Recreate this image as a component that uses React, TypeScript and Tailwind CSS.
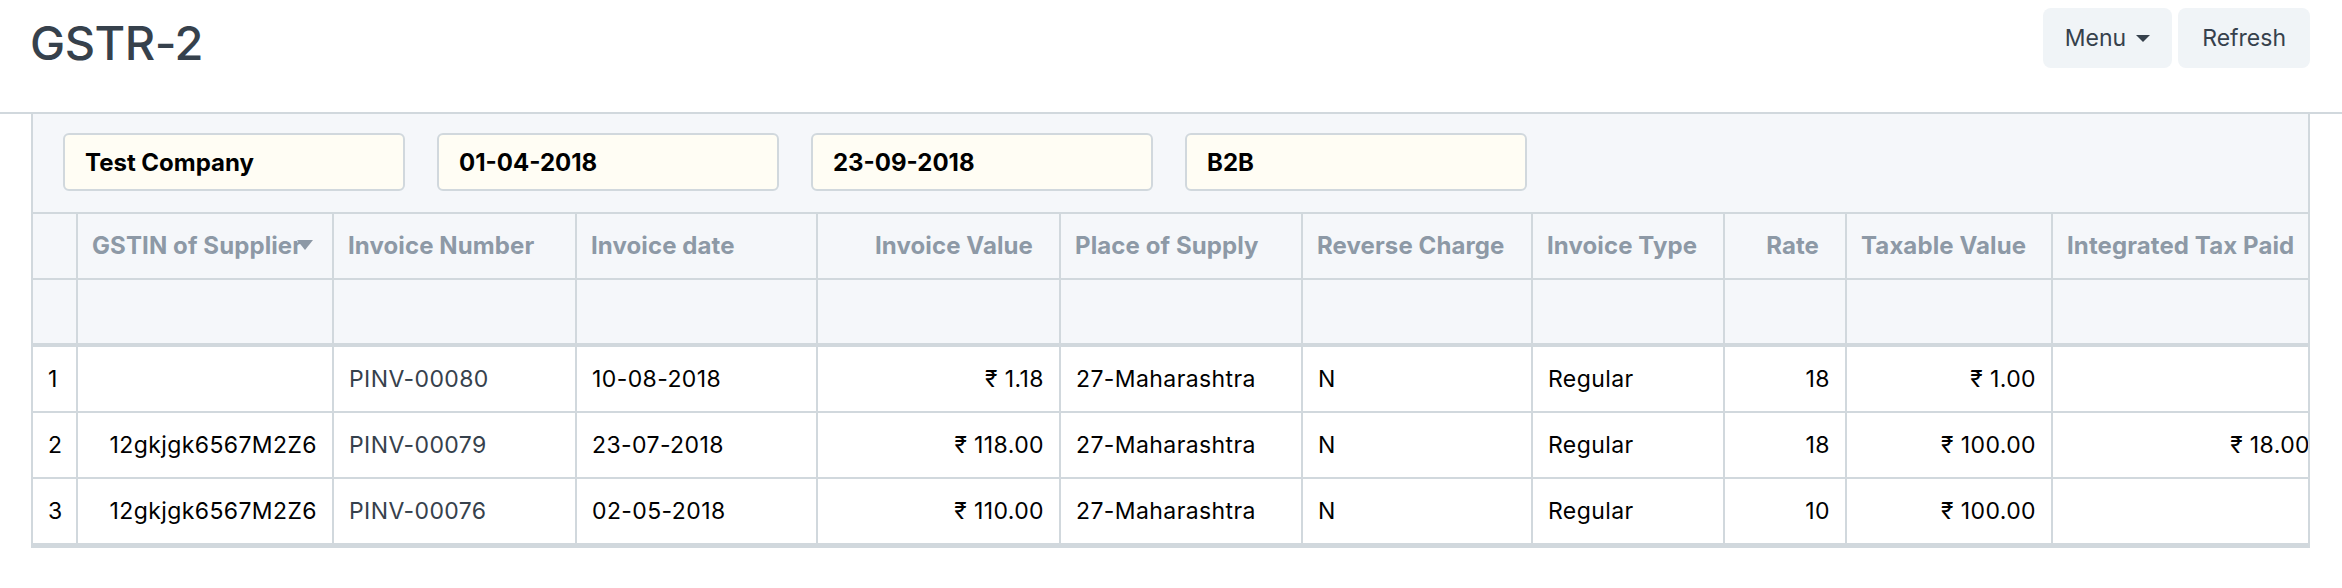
import React from 'react';

type Col = {
    label: string;
    width: string;
    right?: boolean;
    headLeft?: boolean;
    dropdown?: boolean;
};

const columns: Col[] = [
    { label: '', width: 'w-[45px]' },
    { label: 'GSTIN of Supplier', width: 'w-[256px]', dropdown: true },
    { label: 'Invoice Number', width: 'w-[243px]' },
    { label: 'Invoice date', width: 'w-[241px]' },
    { label: 'Invoice Value', width: 'w-[243px]', right: true },
    { label: 'Place of Supply', width: 'w-[242px]' },
    { label: 'Reverse Charge', width: 'w-[230px]' },
    { label: 'Invoice Type', width: 'w-[192px]' },
    { label: 'Rate', width: 'w-[122px]', right: true },
    { label: 'Taxable Value', width: 'w-[206px]', right: true, headLeft: true },
    { label: 'Integrated Tax Paid', width: 'w-[274px]', right: true, headLeft: true },
];

const rows = [
    ['1', '', 'PINV-00080', '10-08-2018', '₹ 1.18', '27-Maharashtra', 'N', 'Regular', '18', '₹ 1.00', ''],
    ['2', '12gkjgk6567M2Z6', 'PINV-00079', '23-07-2018', '₹ 118.00', '27-Maharashtra', 'N', 'Regular', '18', '₹ 100.00', '₹ 18.00'],
    ['3', '12gkjgk6567M2Z6', 'PINV-00076', '02-05-2018', '₹ 110.00', '27-Maharashtra', 'N', 'Regular', '10', '₹ 100.00', ''],
];

const filters = ['Test Company', '01-04-2018', '23-09-2018', 'B2B'];

function HeaderCell({ col }: { col: Col }) {
    const right = col.right && !col.headLeft;
    return (
        <div
            className={`${col.width} shrink-0 relative flex items-center border-r-2 border-[#d1d8dd] pl-[14px] ${
                right ? 'justify-end pr-[26px]' : 'pr-[4px]'
            }`}
        >
            <span className="whitespace-nowrap tracking-[0.1px]">{col.label}</span>
            {col.dropdown && (
                <svg className="absolute right-[19px] top-[26px]" width="16" height="10" viewBox="0 0 16 10">
                    <path d="M0 0 L16 0 L8 10 Z" fill="#8d99a6" />
                </svg>
            )}
        </div>
    );
}

function App() {
    return (
        <div className="w-[2342px] h-[588px] bg-white font-[Inter,sans-serif] overflow-hidden">
            <div className="h-[114px] flex justify-between border-b-2 border-[#d1d8dd]">
                <h1 className="pl-[30px] mt-[19px] text-[47px] leading-none font-medium tracking-[-0.5px] text-[#36414c]">
                    GSTR-2
                </h1>
                <div className="flex gap-[6px] pt-[8px] pr-[32px]">
                    <button className="h-[60px] px-[22px] rounded-[8px] bg-[#f0f4f7] text-[23px] text-[#36414c] flex items-center gap-[10px]">
                        Menu
                        <svg width="14" height="7" viewBox="0 0 14 7">
                            <path d="M0 0 L14 0 L7 7 Z" fill="#36414c" />
                        </svg>
                    </button>
                    <button className="h-[60px] px-[24px] rounded-[8px] bg-[#f0f4f7] text-[23px] text-[#36414c]">
                        Refresh
                    </button>
                </div>
            </div>

            <div className="ml-[31px] mr-[32px] border-x-2 border-b-[5px] border-[#d1d8dd] overflow-hidden">
                <div className="bg-[#f5f7fa] flex gap-[32px] pl-[30px] pt-[19px] pb-[21px] border-b-2 border-[#d1d8dd]">
                    {filters.map((f) => (
                        <div
                            key={f}
                            className="w-[342px] h-[58px] shrink-0 flex items-center px-[20px] pt-[2px] bg-[#fffdf4] border-2 border-[#d1d8dd] rounded-[6px] text-[24px] font-bold text-black"
                        >
                            {f}
                        </div>
                    ))}
                </div>

                <div className="flex h-[66px] bg-[#f5f7fa] border-b-2 border-[#d1d8dd] text-[24px] font-bold text-[#8d99a6]">
                    {columns.map((c, i) => (
                        <HeaderCell key={i} col={c} />
                    ))}
                </div>

                <div className="flex h-[67px] bg-[#f5f7fa] border-b-4 border-[#d1d8dd]">
                    {columns.map((c, i) => (
                        <div key={i} className={`${c.width} shrink-0 border-r-2 border-[#d1d8dd]`} />
                    ))}
                </div>

                {rows.map((r, ri) => (
                    <div
                        key={ri}
                        className={`flex text-[23px] tracking-[0.4px] text-black ${
                            ri < rows.length - 1 ? 'h-[66px] border-b-2 border-[#d1d8dd]' : 'h-[64px]'
                        }`}
                    >
                        {r.map((v, ci) => {
                            const right = ci === 1 || columns[ci].right;
                            return (
                                <div
                                    key={ci}
                                    className={`${columns[ci].width} shrink-0 flex items-center border-r-2 border-[#d1d8dd] whitespace-nowrap px-[15px] ${
                                        right ? 'justify-end' : ''
                                    } ${ci === 2 ? 'text-[#36414c]' : ''}`}
                                >
                                    {v}
                                </div>
                            );
                        })}
                    </div>
                ))}
            </div>
        </div>
    );
}

export default App;
